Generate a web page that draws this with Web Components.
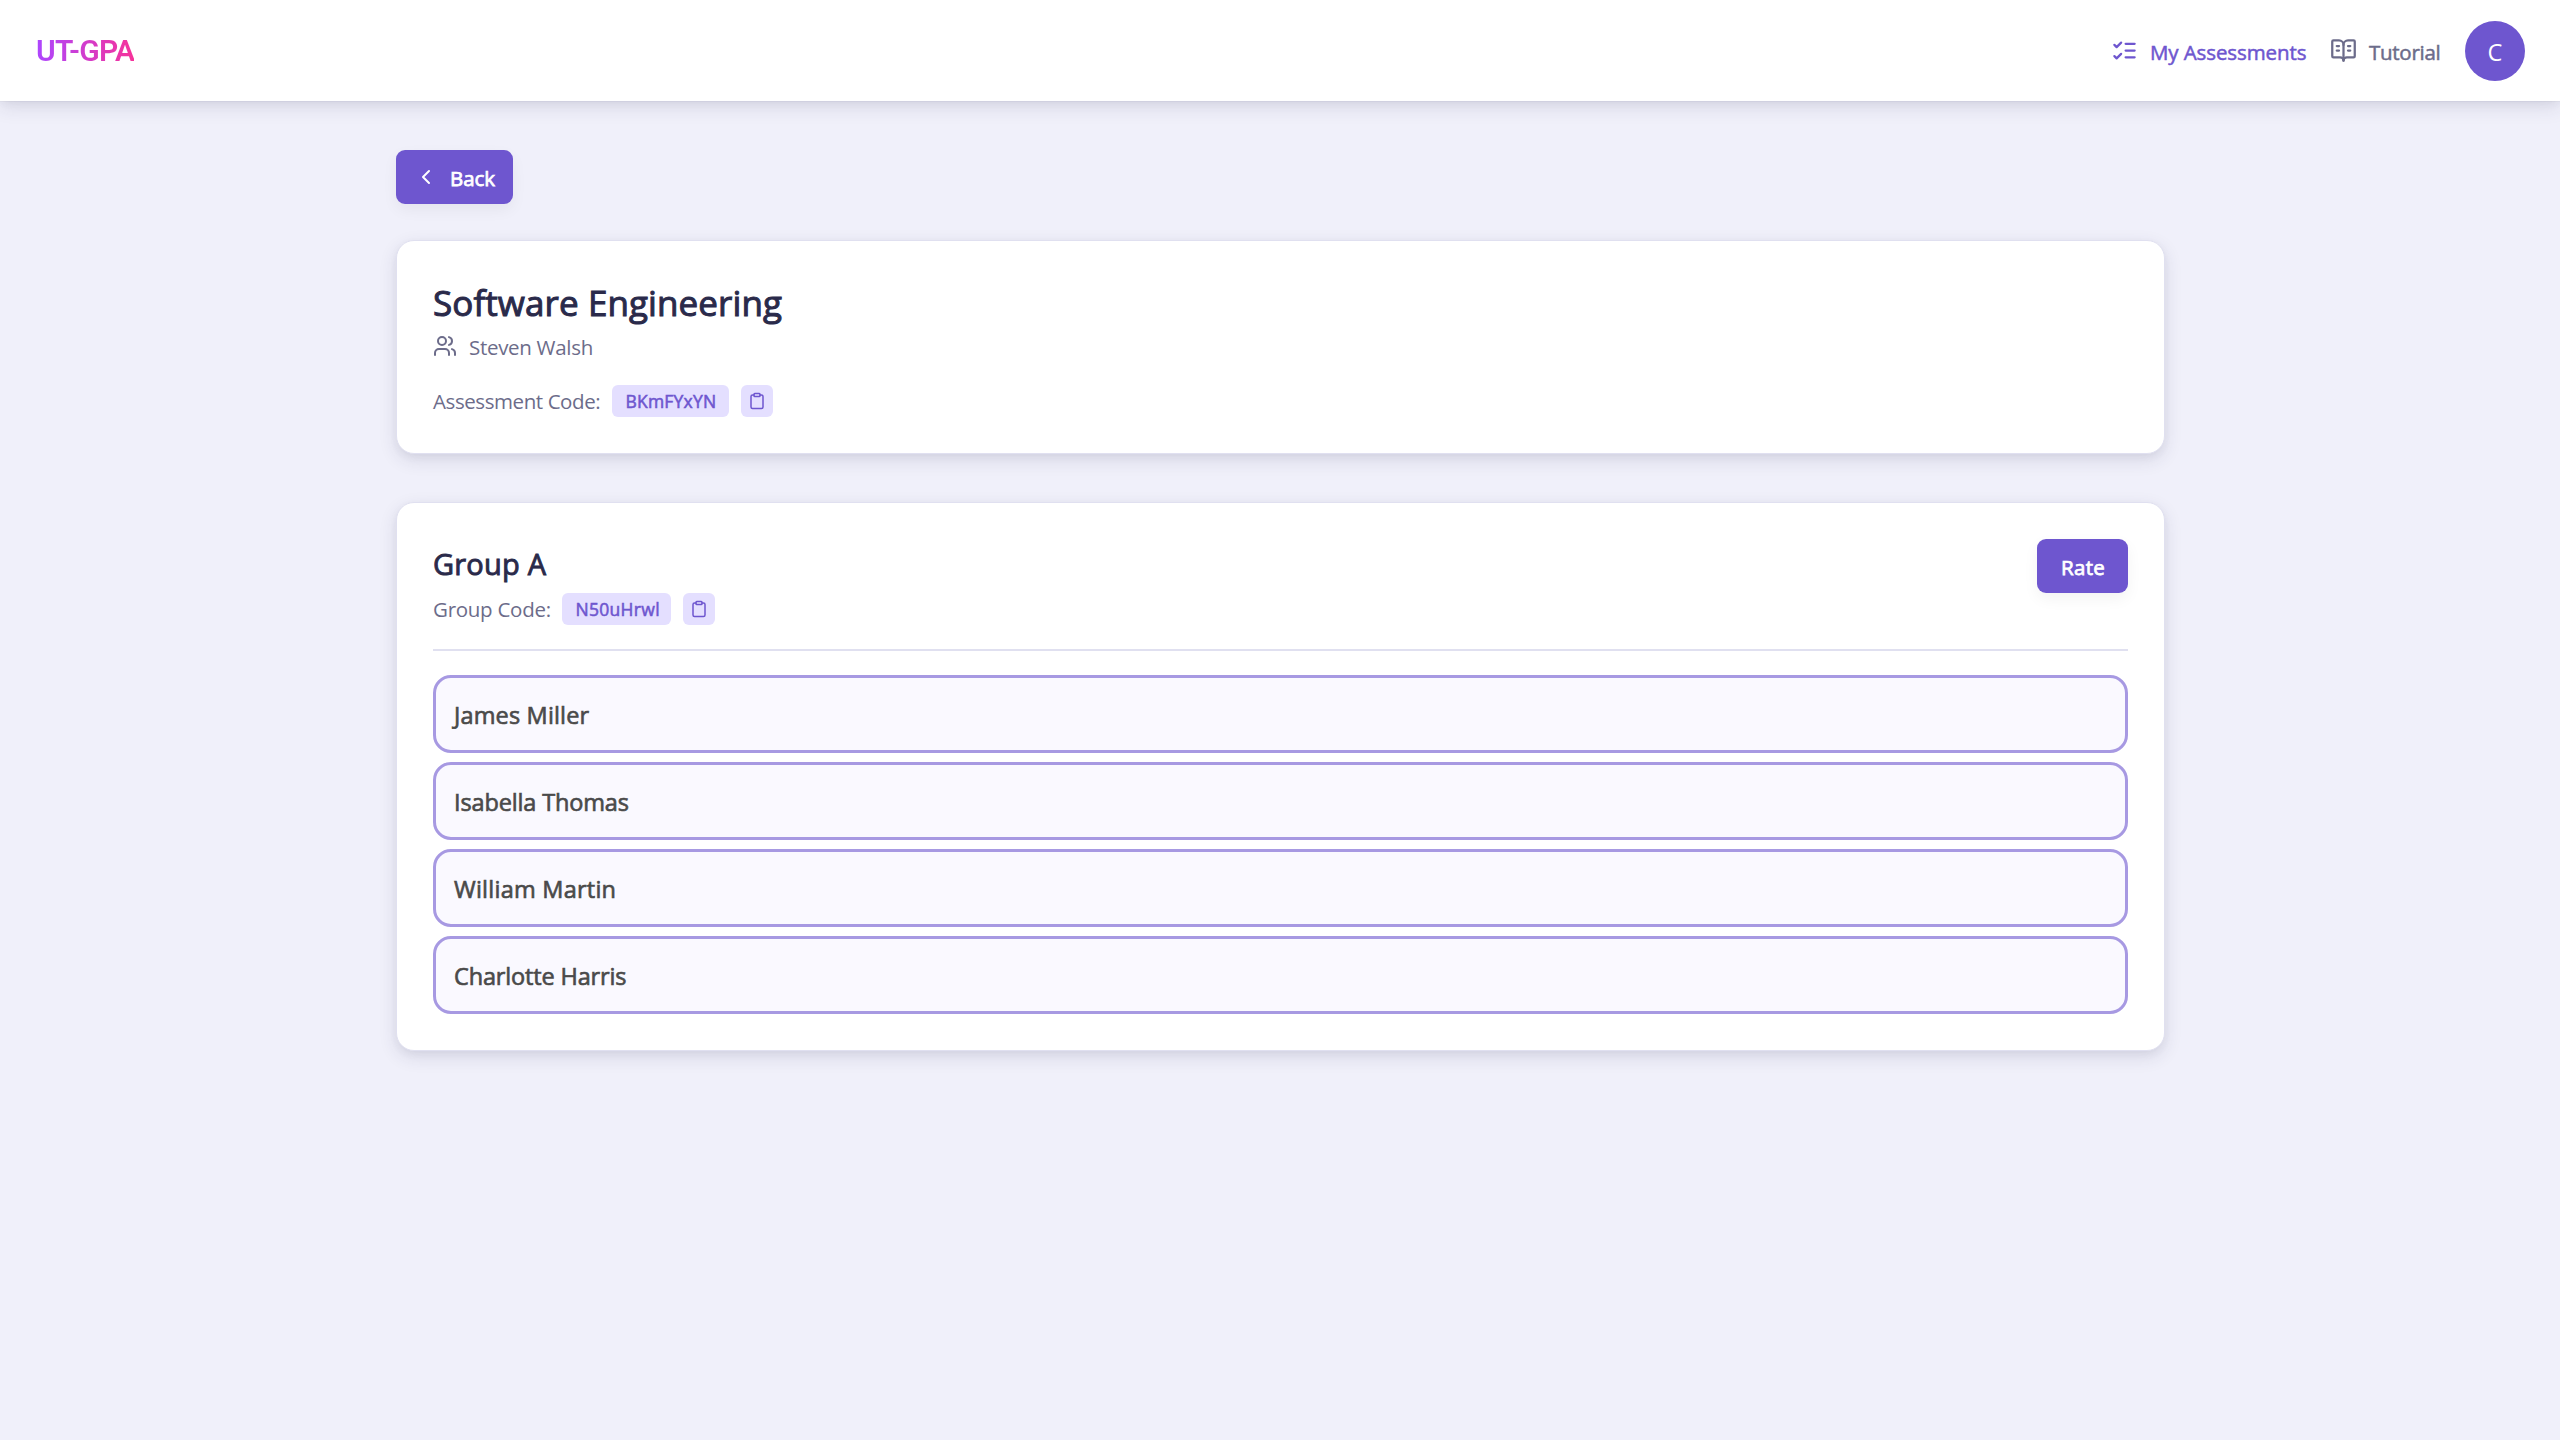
<!DOCTYPE html>
<html lang="en">
<head>
<meta charset="utf-8">
<title>UT-GPA</title>
<style>
:root{--primary:#6e56cf;--fg:#2a2a4a;--muted:#6c6c8a;--chip:#e4dfff;--line:#e0e0f0}
html{background:#f0f0fa}
body{margin:0;min-height:1440px;background:#f0f0fa;color:var(--fg);font-family:"Open Sans","Noto Sans",sans-serif;font-size:20.5px;font-variant-ligatures:none}
</style>
</head>
<body>
<gpa-app></gpa-app>
<script>
const ICONS = {
  checks: '<path d="m3 17 2 2 4-4"/><path d="m3 7 2 2 4-4"/><path d="M13 6h8"/><path d="M13 12h8"/><path d="M13 18h8"/>',
  book: '<path d="M12 7v14"/><path d="M16 12h2"/><path d="M16 8h2"/><path d="M3 18a1 1 0 0 1-1-1V4a1 1 0 0 1 1-1h5a4 4 0 0 1 4 4 4 4 0 0 1 4-4h5a1 1 0 0 1 1 1v13a1 1 0 0 1-1 1h-6a3 3 0 0 0-3 3 3 3 0 0 0-3-3z"/><path d="M6 12h2"/><path d="M6 8h2"/>',
  left: '<path d="m15 18-6-6 6-6"/>',
  users: '<path d="M16 21v-2a4 4 0 0 0-4-4H6a4 4 0 0 0-4 4v2"/><circle cx="9" cy="7" r="4"/><path d="M22 21v-2a4 4 0 0 0-3-3.87"/><path d="M16 3.13a4 4 0 0 1 0 7.75"/>',
  clipboard: '<rect width="8" height="4" x="8" y="2" rx="1" ry="1"/><path d="M16 4h2a2 2 0 0 1 2 2v14a2 2 0 0 1-2 2H6a2 2 0 0 1-2-2V6a2 2 0 0 1 2-2h2"/>'
};
const define = (name, render) => customElements.define(name, class extends HTMLElement {
  connectedCallback() {
    if (this.shadowRoot) return;
    const t = document.createElement('template');
    t.innerHTML = render(this);
    this.attachShadow({mode: 'open'}).append(t.content.cloneNode(true));
  }
});

define('gpa-icon', el => `<style>:host{display:block;flex:none;width:${el.getAttribute('size')}px;height:${el.getAttribute('size')}px}svg{display:block;width:100%;height:100%}</style>
<svg viewBox="0 0 24 24" fill="none" stroke="currentColor" stroke-width="2" stroke-linecap="round" stroke-linejoin="round">${ICONS[el.getAttribute('name')]}</svg>`);

define('gpa-link', () => `<style>
:host{display:flex;align-items:center;gap:12px;color:var(--muted);white-space:nowrap;-webkit-text-stroke:.5px currentColor}
:host([active]){color:var(--primary)}
span{display:block;padding-top:3px;line-height:28px}
</style><slot name="icon"></slot><span><slot></slot></span>`);

define('gpa-button', () => `<style>
:host{display:flex;align-items:center;box-sizing:border-box;height:54px;border-radius:9px;background:var(--primary);color:#fff;box-shadow:0 6px 15px rgba(0,0,0,.05);white-space:nowrap;-webkit-text-stroke:.75px currentColor}
span{display:block;padding-top:2px;line-height:28px}
</style><slot name="icon"></slot><span><slot></slot></span>`);

define('gpa-card', () => `<style>
:host{display:block;box-sizing:border-box;width:1769px;padding:36px;border:1px solid var(--line);border-radius:18px;background:#fff;box-shadow:0 6px 18px rgba(45,45,83,.12),0 3px 9px -1.5px rgba(45,45,83,.06)}
</style><slot></slot>`);

define('gpa-code', el => `<style>
:host{display:flex;align-items:center;height:32px;color:var(--muted);white-space:nowrap}
.l{width:${el.getAttribute('label-width')}px;margin-right:12px;letter-spacing:${el.getAttribute('label-tracking')}px}
.c{width:${el.getAttribute('chip-width')}px;height:32px;margin-right:12px;box-sizing:border-box;padding-left:13.5px;line-height:32px;border-radius:6px;background:var(--chip);color:var(--primary);font-size:17.5px;letter-spacing:${el.getAttribute('chip-tracking')}px;-webkit-text-stroke:.55px currentColor}
.b{display:flex;align-items:center;justify-content:center;width:32px;height:32px;border-radius:6px;background:var(--chip);color:var(--primary)}
</style><span class="l">${el.getAttribute('label')}</span><span class="c">${el.getAttribute('code')}</span><span class="b"><gpa-icon name="clipboard" size="18"></gpa-icon></span>`);

define('gpa-member', () => `<style>
:host{display:flex;align-items:center;box-sizing:border-box;height:78px;padding:1px 18px 0;border:3px solid #a799e2;border-radius:18px;background:#faf9ff;color:#4a4a4a;font-size:23.5px;-webkit-text-stroke:.65px currentColor}
</style><slot></slot>`);

define('gpa-header', () => `<style>
:host{display:flex;align-items:center;justify-content:space-between;box-sizing:border-box;height:101px;padding:0 35px 0 36px;background:#fff;box-shadow:0 1px 0 rgba(45,45,83,.04),0 6px 18px rgba(45,45,83,.12),0 3px 9px -1.5px rgba(45,45,83,.06)}
.logo{padding-top:1px;font:600 30px/36px Roboto,sans-serif;letter-spacing:-.75px;color:transparent;background:linear-gradient(90deg,#ad46ff,#f6339a);background-clip:text;-webkit-background-clip:text}
nav{display:flex;align-items:center;gap:24px}
.a{width:156px;letter-spacing:-.1px}.t{width:72px;letter-spacing:-.28px}
.avatar{display:flex;align-items:center;justify-content:center;box-sizing:border-box;width:60px;height:60px;padding-top:2px;border-radius:50%;background:var(--primary);color:#fff;font-size:23.5px;margin-top:1px}
</style>
<div class="logo">UT-GPA</div>
<nav>
<gpa-link active><gpa-icon slot="icon" name="checks" size="27"></gpa-icon><div class="a">My Assessments</div></gpa-link>
<gpa-link><gpa-icon slot="icon" name="book" size="27"></gpa-icon><div class="t">Tutorial</div></gpa-link>
<div class="avatar">C</div>
</nav>`);

define('gpa-app', () => `<style>
:host{display:block}
main{display:flex;flex-direction:column;align-items:flex-start;padding:49px 0 0 396px}
.back{width:117px;padding-left:18px;letter-spacing:-.1px;margin-bottom:36px}
.back gpa-icon{margin-right:12px}
gpa-card+gpa-card{margin-top:48px}
h1{margin:0;font-size:35px;font-weight:400;line-height:51px;letter-spacing:.09px;-webkit-text-stroke:1px currentColor}
h2{margin:0 0 4.5px;font-size:29px;font-weight:400;line-height:49.5px;letter-spacing:.2px;-webkit-text-stroke:.9px currentColor}
.owner{display:flex;align-items:center;gap:12px;height:24px;margin:6px 0 27px;color:var(--muted)}
.owner span{padding-top:2px;letter-spacing:-.3px}
.head{display:flex;justify-content:space-between;align-items:flex-start;padding-bottom:24px;border-bottom:2px solid var(--line)}
.rate{width:91px;padding-left:24px;letter-spacing:.3px}
.list{display:flex;flex-direction:column;gap:9px;padding-top:24px}
</style>
<gpa-header></gpa-header>
<main>
<gpa-button class="back"><gpa-icon slot="icon" name="left" size="24"></gpa-icon>Back</gpa-button>
<gpa-card>
<h1>Software Engineering</h1>
<div class="owner"><gpa-icon name="users" size="24"></gpa-icon><span>Steven Walsh</span></div>
<gpa-code label="Assessment Code:" label-width="167" label-tracking="-.42" code="BKmFYxYN" chip-width="117" chip-tracking=".2"></gpa-code>
</gpa-card>
<gpa-card>
<div class="head"><div><h2>Group A</h2>
<gpa-code label="Group Code:" label-width="117" label-tracking="-.27" code="N50uHrwl" chip-width="109" chip-tracking=".3"></gpa-code></div>
<gpa-button class="rate">Rate</gpa-button></div>
<div class="list">
<gpa-member style="letter-spacing:.16px"><span>James Miller</span></gpa-member>
<gpa-member style="letter-spacing:-.14px"><span>Isabella Thomas</span></gpa-member>
<gpa-member style="letter-spacing:.24px"><span>William Martin</span></gpa-member>
<gpa-member style="letter-spacing:-.15px"><span>Charlotte Harris</span></gpa-member>
</div>
</gpa-card>
</main>`);
</script>
</body>
</html>
